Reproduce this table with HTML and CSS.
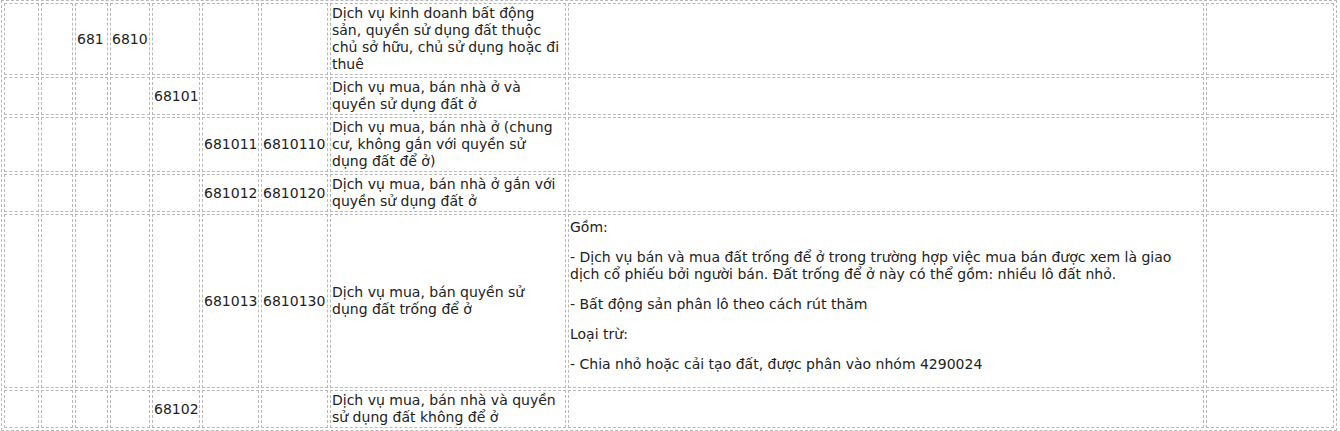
FILE: index.html
```html
<!DOCTYPE html>
<html lang="vi">
<head>
<meta charset="utf-8">
<title>Mã ngành</title>
<link rel="stylesheet" href="styles.css">
</head>
<body>
<table class="codes">
  <colgroup>
    <col class="c1"><col class="c2"><col class="c3"><col class="c4"><col class="c5">
    <col class="c6"><col class="c7"><col class="c8"><col class="c9"><col class="c10">
  </colgroup>
  <tbody>
    <tr>
      <td></td><td></td><td>681</td><td>6810</td><td></td><td></td><td></td>
      <td>Dịch vụ kinh doanh bất động sản, quyền sử dụng đất thuộc chủ sở hữu, chủ sử dụng hoặc đi thuê</td>
      <td></td><td></td>
    </tr>
    <tr>
      <td></td><td></td><td></td><td></td><td>68101</td><td></td><td></td>
      <td>Dịch vụ mua, bán nhà ở và quyền sử dụng đất ở</td>
      <td></td><td></td>
    </tr>
    <tr>
      <td></td><td></td><td></td><td></td><td></td><td>681011</td><td>6810110</td>
      <td>Dịch vụ mua, bán nhà ở (chung cư, không gắn với quyền sử dụng đất để ở)</td>
      <td></td><td></td>
    </tr>
    <tr>
      <td></td><td></td><td></td><td></td><td></td><td>681012</td><td>6810120</td>
      <td>Dịch vụ mua, bán nhà ở gắn với quyền sử dụng đất ở</td>
      <td></td><td></td>
    </tr>
    <tr>
      <td></td><td></td><td></td><td></td><td></td><td>681013</td><td>6810130</td>
      <td>Dịch vụ mua, bán quyền sử dụng đất trống để ở</td>
      <td class="notes">
        <p>Gồm:</p>
        <p>- Dịch vụ bán và mua đất trống để ở trong trường hợp việc mua bán được xem là giao dịch cổ phiếu bởi người bán. Đất trống để ở này có thể gồm: nhiều lô đất nhỏ.</p>
        <p>- Bất động sản phân lô theo cách rút thăm</p>
        <p>Loại trừ:</p>
        <p>- Chia nhỏ hoặc cải tạo đất, được phân vào nhóm 4290024</p>
      </td>
      <td></td>
    </tr>
    <tr>
      <td></td><td></td><td></td><td></td><td>68102</td><td></td><td></td>
      <td>Dịch vụ mua, bán nhà và quyền sử dụng đất không để ở</td>
      <td></td><td></td>
    </tr>
  </tbody>
</table>
</body>
</html>
```

FILE: styles.css
```css
html, body {
  margin: 0;
  padding: 0;
  background: #ffffff;
}

body {
  font-family: "DejaVu Sans", Verdana, sans-serif;
  font-size: 14px;
  line-height: 17px;
  color: #222222;
}

.codes {
  margin-left: 1px;
  border: 1px dashed #b8b8b8;
  border-collapse: separate;
  border-spacing: 2px;
  table-layout: fixed;
  width: 1336px;
}

.codes td {
  border: 1px dashed #b8b8b8;
  padding: 1px;
  vertical-align: middle;
  text-align: left;
}

.notes p {
  margin: 3px 0 13px;
}

.notes p + p {
  margin-top: 0;
}

.c1 { width: 35px; }
.c2 { width: 32px; }
.c3 { width: 33px; }
.c4 { width: 40px; }
.c5 { width: 48px; }
.c6 { width: 57px; }
.c7 { width: 67px; }
.c8 { width: 236px; }
.c9 { width: 636px; }
.c10 { width: 128px; }
```
